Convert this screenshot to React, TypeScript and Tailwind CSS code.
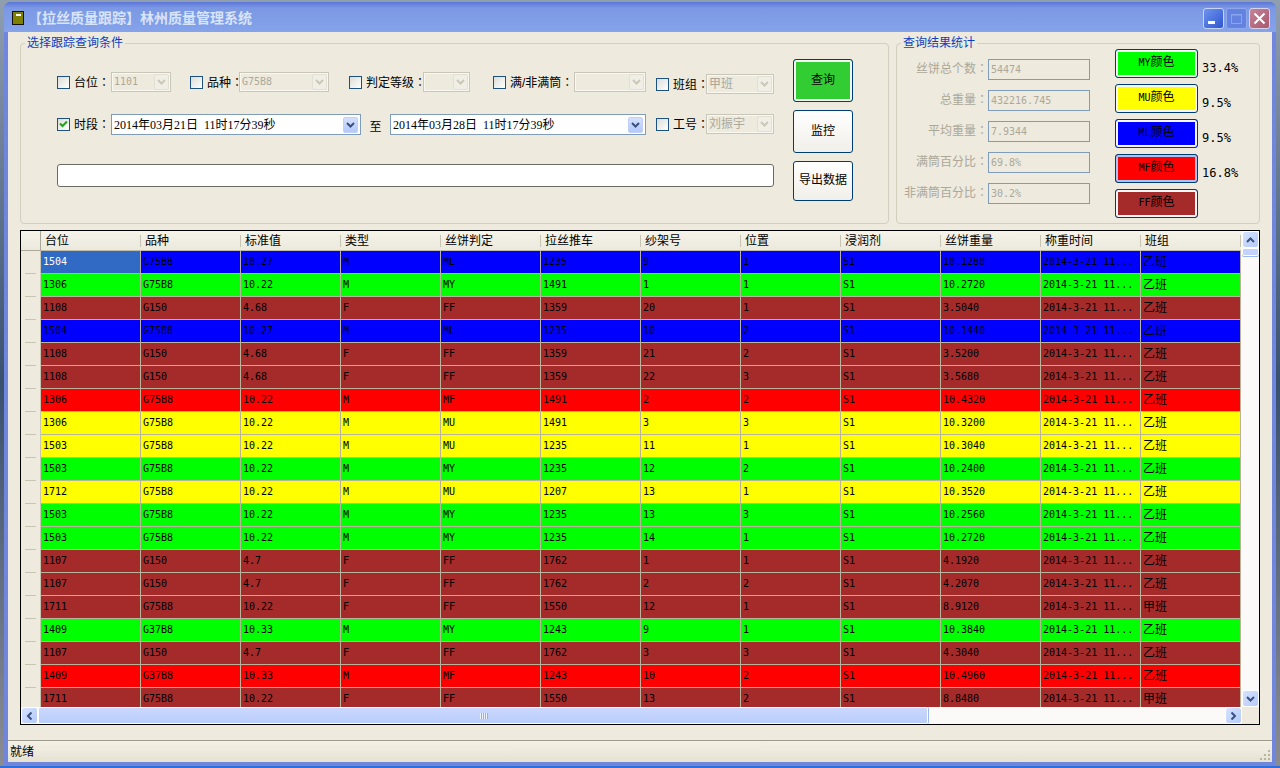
import React from "react";

type Row = [string, string, string, string, string, string, string, string, string, string, string, string];

const columns = ["台位", "品种", "标准值", "类型", "丝饼判定", "拉丝推车", "纱架号", "位置", "浸润剂", "丝饼重量", "称重时间", "班组"];

const time = "2014-3-21 11...";

const rows: Row[] = [
    ["1504", "G75B8", "10.27", "M", "ML", "1235", "9", "1", "S1", "10.1280", time, "乙班"],
    ["1306", "G75B8", "10.22", "M", "MY", "1491", "1", "1", "S1", "10.2720", time, "乙班"],
    ["1108", "G150", "4.68", "F", "FF", "1359", "20", "1", "S1", "3.5040", time, "乙班"],
    ["1504", "G75B8", "10.27", "M", "ML", "1235", "10", "2", "S1", "10.1440", time, "乙班"],
    ["1108", "G150", "4.68", "F", "FF", "1359", "21", "2", "S1", "3.5200", time, "乙班"],
    ["1108", "G150", "4.68", "F", "FF", "1359", "22", "3", "S1", "3.5680", time, "乙班"],
    ["1306", "G75B8", "10.22", "M", "MF", "1491", "2", "2", "S1", "10.4320", time, "乙班"],
    ["1306", "G75B8", "10.22", "M", "MU", "1491", "3", "3", "S1", "10.3200", time, "乙班"],
    ["1503", "G75B8", "10.22", "M", "MU", "1235", "11", "1", "S1", "10.3040", time, "乙班"],
    ["1503", "G75B8", "10.22", "M", "MY", "1235", "12", "2", "S1", "10.2400", time, "乙班"],
    ["1712", "G75B8", "10.22", "M", "MU", "1207", "13", "1", "S1", "10.3520", time, "乙班"],
    ["1503", "G75B8", "10.22", "M", "MY", "1235", "13", "3", "S1", "10.2560", time, "乙班"],
    ["1503", "G75B8", "10.22", "M", "MY", "1235", "14", "1", "S1", "10.2720", time, "乙班"],
    ["1107", "G150", "4.7", "F", "FF", "1762", "1", "1", "S1", "4.1920", time, "乙班"],
    ["1107", "G150", "4.7", "F", "FF", "1762", "2", "2", "S1", "4.2070", time, "乙班"],
    ["1711", "G75B8", "10.22", "F", "FF", "1550", "12", "1", "S1", "8.9120", time, "甲班"],
    ["1409", "G37B8", "10.33", "M", "MY", "1243", "9", "1", "S1", "10.3840", time, "乙班"],
    ["1107", "G150", "4.7", "F", "FF", "1762", "3", "3", "S1", "4.3040", time, "乙班"],
    ["1409", "G37B8", "10.33", "M", "MF", "1243", "10", "2", "S1", "10.4960", time, "乙班"],
    ["1711", "G75B8", "10.22", "F", "FF", "1550", "13", "2", "S1", "8.8480", time, "甲班"],
];

const gradeColor: Record<string, string> = {
    MY: "bg-[#00ff00]",
    MU: "bg-[#ffff00]",
    ML: "bg-[#0000ff]",
    MF: "bg-[#ff0000]",
    FF: "bg-[#a52a2a]",
};

const grades = [
    { code: "MY", percent: "33.4%" },
    { code: "MU", percent: "9.5%" },
    { code: "ML", percent: "9.5%" },
    { code: "MF", percent: "16.8%" },
    { code: "FF", percent: "" },
];

const stats = [
    { id: "total", label: "丝饼总个数", value: "54474" },
    { id: "weight", label: "总重量", value: "432216.745" },
    { id: "average", label: "平均重量", value: "7.9344" },
    { id: "full", label: "满筒百分比", value: "69.8%" },
    { id: "notFull", label: "非满筒百分比", value: "30.2%" },
];

// full-width colon, centred in its square
const Colon = () => <span className="font-['Noto_Sans_CJK_TC',sans-serif]">：</span>;

const Chevron = ({ className }: { className?: string }) => (
    <svg viewBox="0 0 9 6" className={`h-[6px] w-[9px] ${className ?? ""}`} fill="none" stroke="currentColor" strokeWidth="2">
        <path d="M1 1 L4.5 4.5 L8 1" />
    </svg>
);

const CheckBox = ({ id, label, width, checked }: { id: string; label: string; width: string; checked?: boolean }) => (
    <label htmlFor={id} className={`flex items-center gap-1 whitespace-nowrap ${width}`}>
        <span className="relative flex size-[13px] shrink-0">
            <input
                id={id}
                type="checkbox"
                defaultChecked={checked}
                className="peer size-[13px] appearance-none border border-[#1c5180] bg-linear-to-br from-[#dcdcd7] to-white"
            />
            <svg viewBox="0 0 13 13" className="pointer-events-none absolute inset-0 hidden peer-checked:block" fill="none" stroke="#21a121" strokeWidth="2">
                <path d="M3 5.5 L5.5 8 L10 3.5" />
            </svg>
        </span>
        <span>
            {label}
            <Colon />
        </span>
    </label>
);

const Combo = ({ label, value, width }: { label: string; value: string; width: string }) => (
    <span className={`relative flex h-5 shrink-0 ${width}`}>
        <select
            aria-label={label}
            disabled
            className={`w-full appearance-none border border-[#c9c7ba] bg-[#eeeade] pl-[2px] text-[#aca899] opacity-100 outline-1 -outline-offset-2 outline-[#f8f7f0] ${
                /^[\x20-\x7e]+$/.test(value) ? "font-['DejaVu_Sans_Mono',monospace] text-[10px]" : "text-[12px]"
            }`}
        >
            <option>{value}</option>
        </select>
        <span className="pointer-events-none absolute top-[2px] right-[2px] flex h-4 w-[15px] items-center justify-center rounded-xs border border-[#e3dfd3] bg-[#f1eee5] text-[#c9c7ba]">
            <Chevron />
        </span>
    </span>
);

const DateBox = ({ label, value, width }: { label: string; value: string; width: string }) => (
    <span className={`flex h-[21px] items-center border border-[#7f9db9] bg-white pr-[2px] ${width}`}>
        <input
            aria-label={label}
            defaultValue={value}
            className="min-w-0 flex-1 pl-[2px] font-['Liberation_Serif','Noto_Sans_CJK_SC',serif] text-[12px] leading-4 outline-none"
        />
        <button
            type="button"
            aria-label="选择日期"
            className="flex h-4 w-[15px] items-center justify-center rounded-xs border border-[#c1d0f8] bg-linear-to-b from-[#d5e0fd] to-[#b3c9f9] text-[#3a5083]"
        >
            <Chevron />
        </button>
    </span>
);

const Panel = ({ title, className, children }: { title: string; className: string; children: React.ReactNode }) => (
    <fieldset className={`min-w-0 rounded-[4px] border border-[#d3cfbd] ${className}`}>
        <legend className="ml-1 px-[2px] text-[12px] leading-3 text-[#0b3fbf]">{title}</legend>
        {children}
    </fieldset>
);

const ActionButton = ({ label, look }: { label: string; look: string }) => (
    <button type="button" className={`w-[60px] rounded-[3px] border border-[#003c74] pb-[2px] ${look}`}>
        {label}
    </button>
);

const ScrollButton = ({ label, turn }: { label: string; turn: string }) => (
    <button
        type="button"
        aria-label={label}
        className="flex size-[17px] shrink-0 items-center justify-center rounded-[3px] border border-white bg-linear-to-br from-[#d6e2ff] to-[#b5cbf8] text-[#3a5083]"
    >
        <Chevron className={turn} />
    </button>
);

const TitleBar = () => (
    <header className="flex h-[30px] shrink-0 items-center rounded-t-[6px] bg-linear-to-b from-[#5c76d8] via-[#7c98e4] via-20% to-[#84a3ea] pt-[2px] pr-[6px] pl-2">
        <svg viewBox="0 0 12 14" className="h-[14px] w-3">
            <path d="M0 0h12v14H0z" fill="#111" />
            <path d="M1 1h10v12H1z" fill="#808000" />
            <path d="M4 3h5v2H4z" fill="#fff" />
        </svg>
        <h1 className="ml-1 flex-1 text-[14px] leading-4 font-bold text-[#d8e4f8]">【拉丝质量跟踪】林州质量管理系统</h1>
        <div className="flex gap-[2px]">
            <button type="button" aria-label="最小化" className="size-[21px] rounded-[3px] border border-[#c5d3f7] bg-linear-to-br from-[#6f93ee] to-[#2f55cf]">
                <svg viewBox="0 0 19 19">
                    <path d="M4 12h7v3H4z" fill="#fff" />
                </svg>
            </button>
            <button type="button" aria-label="最大化" disabled className="size-[21px] rounded-[3px] border border-[#8fa8ec] bg-[#6482df]">
                <svg viewBox="0 0 19 19" fill="none" stroke="#8aa5ee">
                    <path d="M4.5 5.5h10v9h-10zM4 6h11" />
                </svg>
            </button>
            <button type="button" aria-label="关闭" className="size-[21px] rounded-[3px] border border-[#d8d3ea] bg-linear-to-br from-[#c5839a] to-[#a9586d]">
                <svg viewBox="0 0 19 19" fill="none" stroke="#fff" strokeWidth="2">
                    <path d="M4.5 4.5 L14.5 14.5 M14.5 4.5 L4.5 14.5" />
                </svg>
            </button>
        </div>
    </header>
);

const QueryPanel = () => (
    <Panel title="选择跟踪查询条件" className="flex-1">
        <div className="flex gap-[19px] pt-[10px] pl-9">
            <div className="flex flex-col">
                <div className="flex gap-[10px]">
                    <div className="flex w-[589px] flex-col gap-[22px] pt-[13px]">
                        <div className="flex items-center">
                            <CheckBox id="machine" label="台位" width="w-[54px]" />
                            <Combo label="台位" value="1101" width="w-[60px]" />
                            <CheckBox id="kind" label="品种" width="ml-[19px] w-[49px]" />
                            <Combo label="品种" value="G75B8" width="w-[90px]" />
                            <CheckBox id="grade" label="判定等级" width="ml-5 w-[74px]" />
                            <Combo label="判定等级" value="" width="w-[47px]" />
                            <CheckBox id="filled" label="满/非满筒" width="ml-[23px] w-[81px]" />
                            <Combo label="满/非满筒" value="" width="w-[72px]" />
                        </div>
                        <div className="flex items-center">
                            <CheckBox id="period" label="时段" width="w-[54px]" checked />
                            <DateBox label="开始时间" value="2014年03月21日  11时17分39秒" width="w-[250px]" />
                            <span className="w-[29px] pt-1 text-center">至</span>
                            <DateBox label="结束时间" value="2014年03月28日  11时17分39秒" width="flex-1" />
                        </div>
                    </div>
                    <div className="flex flex-col gap-5 pt-[15px]">
                        <div className="flex items-center">
                            <CheckBox id="team" label="班组" width="w-[50px]" />
                            <Combo label="班组" value="甲班" width="w-[68px]" />
                        </div>
                        <div className="flex items-center">
                            <CheckBox id="worker" label="工号" width="w-[50px]" />
                            <Combo label="工号" value="刘振宇" width="w-[68px]" />
                        </div>
                    </div>
                </div>
                <input aria-label="跟踪条件" className="mt-[29px] h-[23px] rounded-[3px] border border-[#6b6b66] bg-white px-1 outline-none" />
            </div>
            <div className="flex flex-col gap-2">
                <ActionButton label="查询" look="h-[43px] bg-[#32cd32] shadow-[inset_0_0_0_2px_#f4f8f4]" />
                <ActionButton label="监控" look="h-[43px] bg-linear-to-b from-white to-[#f1efe9]" />
                <ActionButton label="导出数据" look="h-10 bg-linear-to-b from-white to-[#f1efe9]" />
            </div>
        </div>
    </Panel>
);

const ResultPanel = () => (
    <Panel title="查询结果统计" className="w-[364px] shrink-0">
        <div className="flex">
            <div className="flex w-[193px] flex-col gap-[10px] pt-[10px]">
                {stats.map((s) => (
                    <div key={s.id} className="flex">
                        <label htmlFor={s.id} className="flex-1 text-right leading-[18px] whitespace-nowrap text-[#aca899]">
                            {s.label}
                            <Colon />
                        </label>
                        <input
                            id={s.id}
                            disabled
                            defaultValue={s.value}
                            className="h-[21px] w-[102px] border border-[#7f9db9] px-[2px] font-['DejaVu_Sans_Mono',monospace] text-[10px] text-[#aca899]"
                        />
                    </div>
                ))}
            </div>
            <div className="ml-[25px] flex flex-col gap-[6px]">
                {grades.map((g) => (
                    <div key={g.code} className="flex items-end gap-1">
                        <button
                            type="button"
                            className={`h-[29px] w-[83px] rounded-[3px] border border-[#003c74] pb-[2px] ${gradeColor[g.code]} ${
                                g.code === "MF" ? "shadow-[inset_0_0_0_2px_#a9c4f5]" : "shadow-[inset_0_0_0_2px_#f4f6fa]"
                            }`}
                        >
                            <span className="font-['DejaVu_Sans_Mono',monospace] text-[10px]">{g.code}</span>颜色
                        </button>
                        <span className="font-['DejaVu_Sans_Mono',monospace] leading-5">{g.percent}</span>
                    </div>
                ))}
            </div>
        </div>
    </Panel>
);

const DataGrid = () => (
    <section className="flex min-h-0 flex-1 flex-col border border-black bg-[#fbfaf8]">
        <div className="flex min-h-0 flex-1">
            <div className="min-w-0 flex-1 overflow-hidden">
                <table className="w-[1220px] table-fixed border-separate border-spacing-0">
                    <colgroup>
                        <col className="w-5" />
                        {columns.map((c) => (
                            <col key={c} className="w-[100px]" />
                        ))}
                    </colgroup>
                    <thead>
                        <tr className="h-5 bg-linear-to-b from-[#f6f4ea] to-[#ebe8dc]">
                            <td className="border-r border-b border-[#aca899]" />
                            {columns.map((c) => (
                                <th key={c} className="border-b border-[#c2bda8] p-0 text-left font-normal">
                                    <div className="flex h-3 items-center border-r border-[#c7c5b2] pl-1">{c}</div>
                                </th>
                            ))}
                        </tr>
                    </thead>
                    <tbody>
                        {rows.map((row, i) => (
                            <tr key={i} className={`h-[23px] ${gradeColor[row[4]]}`}>
                                <td className="border-r border-[#c7c5b2] bg-[#eeeade] px-1 py-0 align-bottom">
                                    <div className="border-b border-[#c7c5b2]" />
                                </td>
                                {row.map((cell, j) => (
                                    <td
                                        key={j}
                                        className={`overflow-hidden border-r border-b border-[#b9b39b] py-0 pr-0 pl-[2px] leading-4 whitespace-nowrap ${
                                            j === 11 ? "text-[12px]" : "font-['DejaVu_Sans_Mono',monospace] text-[10px]"
                                        } ${i === 0 && j === 0 ? "bg-[#316ac5] text-white" : ""}`}
                                    >
                                        {cell}
                                    </td>
                                ))}
                            </tr>
                        ))}
                    </tbody>
                </table>
            </div>
            <div className="flex w-[17px] shrink-0 flex-col">
                <ScrollButton label="向上" turn="rotate-180" />
                <div className="h-2 rounded-xs border border-white bg-[#c3d3fd] shadow-[0_1px_0_#9db8ea]" />
                <div className="flex-1" />
                <ScrollButton label="向下" turn="" />
            </div>
        </div>
        <div className="flex h-[17px] shrink-0">
            <ScrollButton label="向左" turn="rotate-90" />
            <div className="flex flex-1">
                <div className="flex w-3/4 items-center justify-center gap-px rounded-xs border border-white bg-linear-to-b from-[#cad8fe] to-[#b9cdfb] shadow-[1px_0_0_#9db8ea]">
                    {[0, 1, 2, 3].map((n) => (
                        <span key={n} className="h-[6px] w-px bg-[#eef4fe] shadow-[1px_0_0_#8cb0f8]" />
                    ))}
                </div>
            </div>
            <ScrollButton label="向右" turn="-rotate-90" />
            <div className="w-[17px] bg-[#eeeade]" />
        </div>
    </section>
);

const StatusBar = () => (
    <footer className="flex h-[22px] shrink-0 items-center justify-between border-t border-[#9d9a8c] bg-linear-to-b from-[#f3f0e4] via-[#eeeade] to-[#e6e2d0] pl-[2px]">
        <span>就绪</span>
        <svg viewBox="0 0 12 12" className="mt-2 size-3" fill="#b8b4a2">
            <path d="M8 0h2v2H8zM8 4h2v2H8zM4 4h2v2H4zM8 8h2v2H8zM4 8h2v2H4zM0 8h2v2H0z" />
        </svg>
    </footer>
);

export default function App() {
    return (
        <div className="flex h-screen flex-col bg-linear-to-b from-[#8f9fb0] via-[#39506f] to-[#8b8c92] font-['Liberation_Sans','Noto_Sans_CJK_SC',sans-serif] text-[12px] leading-4 text-black">
            <div className="mx-1 mt-[2px] flex min-h-0 flex-1 flex-col rounded-t-[7px] bg-[#6f86dc] px-1 pb-1">
                <div className="-mx-1 flex flex-col">
                    <TitleBar />
                </div>
                <main className="flex min-h-0 flex-1 flex-col bg-[#eeeade] px-3 pt-[5px] pb-[15px]">
                    <div className="flex h-[187px] shrink-0 gap-[7px]">
                        <QueryPanel />
                        <ResultPanel />
                    </div>
                    <div className="mt-[6px] flex min-h-0 flex-1 flex-col">
                        <DataGrid />
                    </div>
                </main>
                <StatusBar />
            </div>
            <div className="h-[2px] bg-[#2f6fdc]" />
        </div>
    );
}
